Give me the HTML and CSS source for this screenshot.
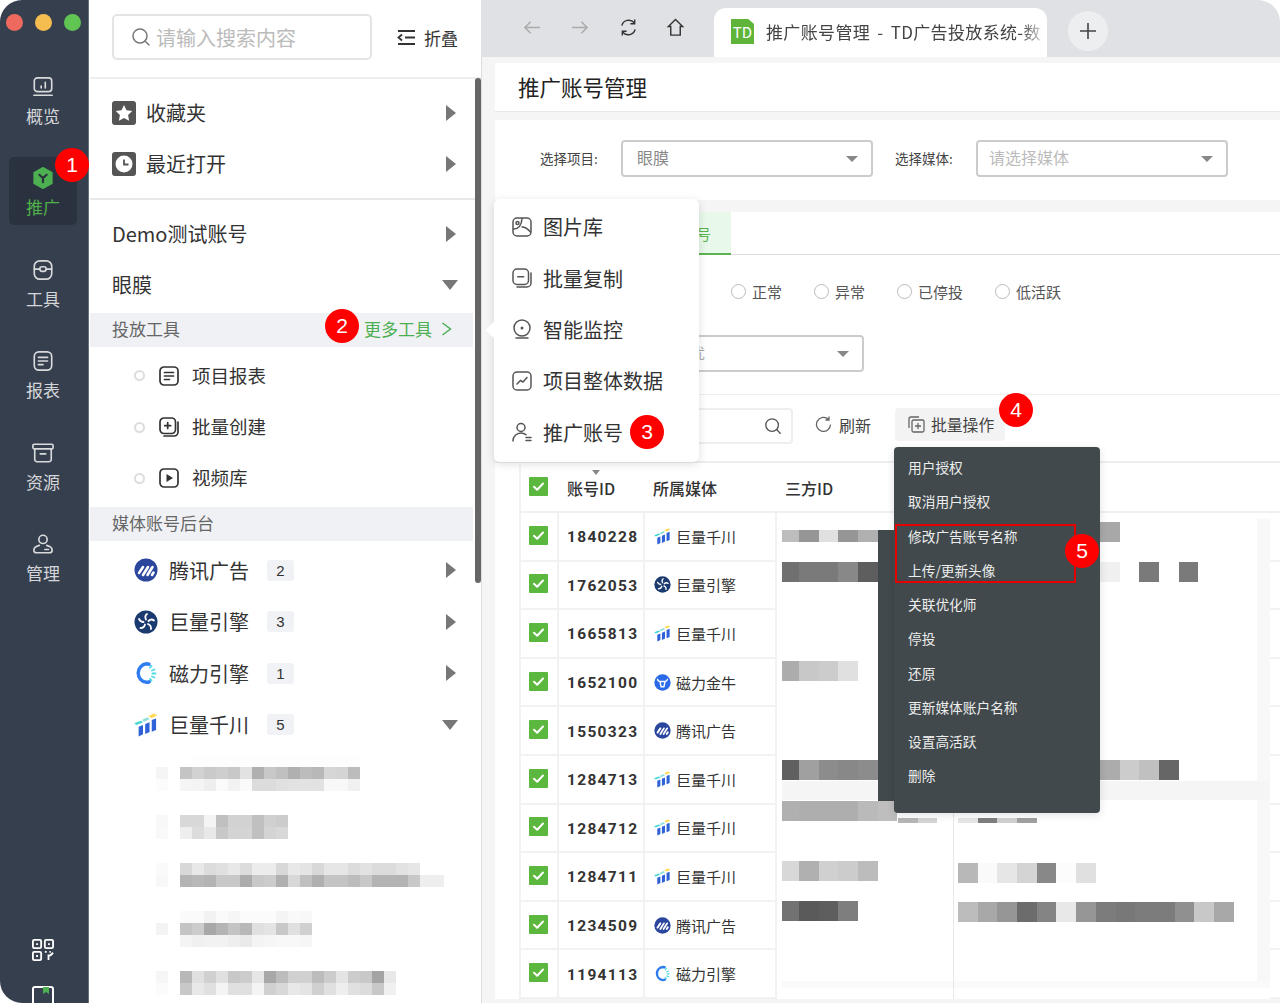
FILE: index.html
```html
<!DOCTYPE html>
<html lang="zh-CN">
<head>
    <meta charset="UTF-8">
    <title>推广账号管理</title>
    <link rel="stylesheet" href="styles.css">
</head>
<body>
<svg class="defs" xmlns="http://www.w3.org/2000/svg">
    <symbol id="i-qc" viewBox="0 1.500 21.500 22">
        <path fill="#3ed6d0" d="M0 11l6-2.500 2 1.500-6 2.500z"/>
        <path fill="#8fe0d8" d="M7 8l5-2.500 2 1.500-5 2.500z"/>
        <path fill="#ffd84d" d="M13 4.500l5-2.500 3 1.500-5 2.500z"/>
        <path fill="#2f62d8" d="M4 14l4-1.500v8.500l-4 2z"/>
        <path fill="#2f62d8" d="M10 11.500l4-1.500v9l-4 1.800z"/>
        <path fill="#2f62d8" d="M16 8l4-1.500v10.500l-4 1.800z"/>
    </symbol>
    <symbol id="i-tx" viewBox="0 0 24 24">
        <circle cx="12" cy="12" r="11.500" fill="#2b479d"/>
        <path fill="none" stroke="#fff" stroke-width="2.600" stroke-linecap="round" d="M5 15l4-6M9 17l5-8M13.500 17l5-8M18 17l1.500-2.500"/>
    </symbol>
    <symbol id="i-jl" viewBox="0 0 24 24">
        <circle cx="12" cy="12" r="11.500" fill="#1b3a70"/>
        <g fill="none" stroke="#fff" stroke-width="1.800" stroke-linecap="round">
            <path d="M12 9.500c-1-2-1-4 1-5.500M14.500 11c1.500-1.500 3.500-2 5.500-.5M14 14c2 .8 3.200 2.500 3 5M11 14.500c-.5 2-2 3.500-4.500 3.500M9.500 12c-2 0-3.500-1-4.500-3"/>
        </g>
    </symbol>
    <symbol id="i-cl" viewBox="0 0 24 24">
        <path fill="none" stroke="#2f7cf0" stroke-width="3.400" stroke-linecap="round" d="M15 3.200a9.500 9.500 0 0 0-2.500-.4 9.300 9.300 0 0 0 0 18.500c1 0 2-.2 2.800-.5"/>
        <g stroke="#4fd8e6" stroke-width="1.800" stroke-linecap="round">
            <path d="M16 6.500l1.500-1.500M18 9.500l2.500-1M18.500 12.500h3M18 15.500l2.500 1M16 18l1.500 1.500"/>
        </g>
    </symbol>
    <symbol id="i-cj" viewBox="0 0 24 24">
        <circle cx="12" cy="12" r="11.500" fill="#2a6ae8"/>
        <path fill="none" stroke="#fff" stroke-width="2" stroke-linecap="round" stroke-linejoin="round" d="M5 7.500c.5 2 2 3 4 3h6c2 0 3.500-1 4-3M8.500 11l1.500 7h4l1.500-7"/>
    </symbol>
    <symbol id="i-check" viewBox="0 0 19 19">
        <rect width="19" height="19" rx="1" fill="#5bb73e"/>
        <path fill="none" stroke="#fff" stroke-width="2" stroke-linecap="round" stroke-linejoin="round" d="M5 9.800l3.200 3L14 6.500"/>
    </symbol>
    <symbol id="i-search" viewBox="0 0 20 20">
        <circle cx="9" cy="9" r="7" fill="none" stroke="currentColor" stroke-width="1.500"/>
        <path stroke="currentColor" stroke-width="1.500" stroke-linecap="round" d="M14 14l4 4"/>
    </symbol>
</svg>

<div class="app">
    <nav class="rail">
        <div class="lights"><i class="red"></i><i class="amber"></i><i class="green"></i></div>
        <a class="rail-item">
            <svg viewBox="0 0 24 24"><rect x="2.500" y="2" width="19" height="15" rx="3.500"/><path d="M2 21h20M10 13v-2M14.500 13V7"/></svg>
            <span>概览</span>
        </a>
        <a class="rail-item active">
            <svg viewBox="0 0 24 24"><path class="hex" d="M12 0.800l9.600 5.500v11.400L12 23.200 2.400 17.700V6.300z"/><path class="hex-y" d="M8 8.500l4 3.500 4-3.500M12 12v4.500"/></svg>
            <span>推广</span>
        </a>
        <a class="rail-item">
            <svg viewBox="0 0 24 24"><rect x="2.500" y="2" width="19" height="20" rx="6"/><path d="M2.500 11h6M15.500 11h6"/><rect x="8.500" y="8.500" width="7" height="5" rx="2.500"/></svg>
            <span>工具</span>
        </a>
        <a class="rail-item">
            <svg viewBox="0 0 24 24"><rect x="2.500" y="2" width="19" height="20" rx="5"/><path d="M7 8h10M7 12h10M7 16h5"/></svg>
            <span>报表</span>
        </a>
        <a class="rail-item">
            <svg viewBox="0 0 24 24"><rect x="1" y="2.500" width="22" height="5" rx="1.500"/><path d="M3 7.500V19a2.500 2.500 0 0 0 2.500 2.500h13A2.500 2.500 0 0 0 21 19V7.500M9 13h6"/></svg>
            <span>资源</span>
        </a>
        <a class="rail-item">
            <svg viewBox="0 0 24 24"><circle cx="12" cy="7" r="4.500"/><path d="M8 13.500c-3.500.8-6 3.200-6 5.500 0 1.800 1 2.500 3 2.500h14c2 0 3-.7 3-2.500 0-2.300-2.500-4.700-6-5.500M14 18h4"/></svg>
            <span>管理</span>
        </a>
        <svg class="rail-qr" viewBox="0 0 24 24">
            <rect x="1" y="1" width="9" height="9" rx="1.500"/><rect x="14" y="1" width="9" height="9" rx="1.500"/><rect x="1" y="14" width="9" height="9" rx="1.500"/>
            <path d="M4.500 5.500h2M17.500 5.500h2M4.500 18.500h2M14 14h2M19 14l1.500 0M17 18h3M20 18l3-3M18 18v5"/>
        </svg>
        <svg class="rail-book" viewBox="0 0 22 24">
            <rect x="1" y="1" width="20" height="30" rx="2"/>
            <path class="flag" d="M11 1h6v7l-3-2-3 2z"/>
        </svg>
    </nav>

    <aside class="side">
        <div class="side-top">
            <div class="side-search">
                <svg class="search-ico" width="20" height="20"><use href="#i-search"/></svg>
                <span>请输入搜索内容</span>
            </div>
            <div class="collapse">
                <svg width="19" height="17" viewBox="0 0 19 17"><path d="M1 2h17M8 8.500h10M1 15h17M5 5.500L1.500 8.500 5 11.500"/></svg>
                <span>折叠</span>
            </div>
        </div>

        <div class="side-group fav">
            <div class="side-row">
                <svg class="row-ico" viewBox="0 0 24 24"><rect width="24" height="24" rx="3" fill="#555"/><path fill="#fff" d="M12 4l2.500 5.200 5.700.8-4.100 4 1 5.700L12 17l-5.100 2.700 1-5.700-4.100-4 5.700-.8z"/></svg>
                <span class="row-text">收藏夹</span><i class="caret-r"></i>
            </div>
            <div class="side-row">
                <svg class="row-ico" viewBox="0 0 24 24"><rect width="24" height="24" rx="3" fill="#555"/><circle cx="12" cy="12" r="8.500" fill="#fff"/><path fill="none" stroke="#555" stroke-width="1.800" d="M12 7.500V12.500H16.500"/></svg>
                <span class="row-text">最近打开</span><i class="caret-r"></i>
            </div>
        </div>

        <div class="side-group projects">
            <div class="side-row"><span>Demo测试账号</span><i class="caret-r"></i></div>
            <div class="side-row"><span>眼膜</span><i class="caret-d"></i></div>
        </div>

        <div class="band"><span>投放工具</span><span class="more">更多工具<svg width="11" height="14" viewBox="0 0 11 14"><path d="M1.500 1l8 6-8 6"/></svg></span></div>
        <div class="tool-list">
            <div class="tool-row"><i class="dot"></i>
                <svg viewBox="0 0 20 20"><rect x="1" y="1" width="18" height="18" rx="4"/><path d="M5.500 6.500h9M5.500 10h9M5.500 13.500h5"/></svg>
                <span>项目报表</span></div>
            <div class="tool-row"><i class="dot"></i>
                <svg viewBox="0 0 20 20"><rect x="1" y="1" width="15.500" height="15.500" rx="4"/><path d="M8.700 5.500v6M5.700 8.700h6M19 5v10a4 4 0 0 1-4 4H5"/></svg>
                <span>批量创建</span></div>
            <div class="tool-row"><i class="dot"></i>
                <svg viewBox="0 0 20 20"><rect x="1" y="1" width="18" height="18" rx="4"/><path class="solid" d="M7.500 6l6.500 4-6.500 4z"/></svg>
                <span>视频库</span></div>
        </div>

        <div class="band"><span>媒体账号后台</span></div>
        <div class="media-list">
            <div class="media-row"><svg><use href="#i-tx"/></svg><span class="row-text">腾讯广告</span><b>2</b><i class="caret-r"></i></div>
            <div class="media-row"><svg><use href="#i-jl"/></svg><span class="row-text">巨量引擎</span><b>3</b><i class="caret-r"></i></div>
            <div class="media-row"><svg><use href="#i-cl"/></svg><span class="row-text">磁力引擎</span><b>1</b><i class="caret-r"></i></div>
            <div class="media-row"><svg><use href="#i-qc"/></svg><span class="row-text">巨量千川</span><b>5</b><i class="caret-d"></i></div>
        </div>

        <div class="acct-list">
            <div class="mosaic c12" data-rows="00 00 00 fd fd fd fd fd fd fd fd fd fd fd fd fd fd|f5 00 c4 d2 ca ce c8 e2 b0 c8 c0 b0 bc b8 d6 d4 bc|fc 00 f5 f4 ee fa f2 fa dc dc e0 e2 e2 e2 f8 f8 f0"></div>
            <div class="mosaic c12" data-rows="f8 00 d8 d8 f4 c0 d2 d2 c0 d0 cc|f9 00 ee dc e8 c8 d4 d4 c0 d4 d8"></div>
            <div class="mosaic c12" data-rows="fa 00 d8 e8 dc e0 e8 dc ec ec d8 e8 e4 d8 e6 e6 dc e2 dc dc e2 e6|f8 00 b4 b8 b4 c8 c8 ac c8 cc b0 d8 c0 b0 c4 c4 bc c8 b4 b4 b4 c8 ee ee"></div>
            <div class="mosaic c12" data-rows="00 00 fa fa f2 fa f6 fb fb fb f4 f9 f8|f3 00 c4 cc a8 b4 c4 b8 e0 e4 c8 e0 d0|00 00 f4 f0 f2 f2 ee ea f4 f6 f8 f8 f6"></div>
            <div class="mosaic c12" data-rows="f6 00 b8 e0 d0 e0 c8 cc e6 a8 bc d0 d0 bc cc e4 cc c8 a4 e8|fb 00 c8 e8 e0 f4 e0 e0 f4 d0 d8 e8 e4 d0 e0 ee e0 dc c8 f0"></div>
        </div>
        <div class="side-scroll"></div>
    </aside>

    <main class="main">
        <header class="browser-bar">
            <div class="nav-btns">
                <svg class="off" viewBox="0 0 20 20"><path d="M18 10H2M8 4l-6 6 6 6"/></svg>
                <svg class="off" viewBox="0 0 20 20"><path d="M2 10h16M12 4l6 6-6 6"/></svg>
                <svg class="on reload" viewBox="0 0 20 20"><path d="M3 8a7.500 7.500 0 0 1 13-3M17 12a7.500 7.500 0 0 1-13 3M16.500 1.500V6H12M3.500 18.500V14H8"/></svg>
                <svg class="on" viewBox="0 0 20 20"><path d="M10 1.500L2.500 9h2.500v9h10V9h2.500z"/></svg>
            </div>
            <div class="tab">
                <span class="td">TD</span>
                <span class="tab-title">推广账号管理 - TD广告投放系统-数</span>
            </div>
            <div class="new-tab"><svg width="18" height="18" viewBox="0 0 18 18"><path d="M9 1v16M1 9h16"/></svg></div>
        </header>

        <div class="content">
            <div class="page-head">推广账号管理</div>
            <section class="filters">
                <label>选择项目:</label>
                <div class="select"><span>眼膜</span><i class="tri"></i></div>
                <label>选择媒体:</label>
                <div class="select empty"><span>请选择媒体</span><i class="tri"></i></div>
            </section>

            <section class="panel">
                <div class="tabs"><div class="tab-on">推广账号</div></div>
                <div class="radios">
                    <div class="radio"><i></i>正常</div>
                    <div class="radio"><i></i>异常</div>
                    <div class="radio"><i></i>已停投</div>
                    <div class="radio"><i></i>低活跃</div>
                </div>
                <div class="select-row">
                    <div class="select wide"><span>账号优</span><i class="tri"></i></div>
                </div>
                <div class="toolbar">
                    <div class="tb-search"><svg width="18" height="18"><use href="#i-search"/></svg></div>
                    <div class="refresh">
                        <svg width="17" height="17" viewBox="0 0 17 17"><path d="M15.500 8.500a7 7 0 1 1-2-5M14 0.500v3.500h-3.500"/></svg>
                        <span>刷新</span>
                    </div>
                    <div class="batch">
                        <svg width="17" height="17" viewBox="0 0 17 17"><path d="M1 12V3a2 2 0 0 1 2-2h8"/><rect x="4" y="4" width="12" height="12" rx="1.500"/><path d="M10 7v6M7 10h6"/></svg>
                        <span>批量操作</span>
                    </div>
                </div>

                <div class="table">
                    <div class="thead">
                        <div class="th"><svg class="cb"><use href="#i-check"/></svg></div>
                        <div class="th id"><i class="sort"></i>账号ID</div>
                        <div class="th">所属媒体</div>
                        <div class="th third">三方ID</div>
                    </div>
                    <div class="tr"><div class="td-c"><svg class="cb"><use href="#i-check"/></svg></div><div class="td-c num">1840228</div><div class="td-c mc"><svg><use href="#i-qc"/></svg>巨量千川</div><div class="rest"></div><div class="tick"></div></div>
                    <div class="tr"><div class="td-c"><svg class="cb"><use href="#i-check"/></svg></div><div class="td-c num">1762053</div><div class="td-c mc"><svg><use href="#i-jl"/></svg>巨量引擎</div><div class="rest"></div><div class="tick"></div></div>
                    <div class="tr"><div class="td-c"><svg class="cb"><use href="#i-check"/></svg></div><div class="td-c num">1665813</div><div class="td-c mc"><svg><use href="#i-qc"/></svg>巨量千川</div><div class="rest"></div><div class="tick"></div></div>
                    <div class="tr"><div class="td-c"><svg class="cb"><use href="#i-check"/></svg></div><div class="td-c num">1652100</div><div class="td-c mc"><svg><use href="#i-cj"/></svg>磁力金牛</div><div class="rest"></div><div class="tick"></div></div>
                    <div class="tr"><div class="td-c"><svg class="cb"><use href="#i-check"/></svg></div><div class="td-c num">1550323</div><div class="td-c mc"><svg><use href="#i-tx"/></svg>腾讯广告</div><div class="rest"></div><div class="tick"></div></div>
                    <div class="tr"><div class="td-c"><svg class="cb"><use href="#i-check"/></svg></div><div class="td-c num">1284713</div><div class="td-c mc"><svg><use href="#i-qc"/></svg>巨量千川</div><div class="rest"></div><div class="tick"></div></div>
                    <div class="tr"><div class="td-c"><svg class="cb"><use href="#i-check"/></svg></div><div class="td-c num">1284712</div><div class="td-c mc"><svg><use href="#i-qc"/></svg>巨量千川</div><div class="rest"></div><div class="tick"></div></div>
                    <div class="tr"><div class="td-c"><svg class="cb"><use href="#i-check"/></svg></div><div class="td-c num">1284711</div><div class="td-c mc"><svg><use href="#i-qc"/></svg>巨量千川</div><div class="rest"></div><div class="tick"></div></div>
                    <div class="tr"><div class="td-c"><svg class="cb"><use href="#i-check"/></svg></div><div class="td-c num">1234509</div><div class="td-c mc"><svg><use href="#i-tx"/></svg>腾讯广告</div><div class="rest"></div><div class="tick"></div></div>
                    <div class="tr"><div class="td-c"><svg class="cb"><use href="#i-check"/></svg></div><div class="td-c num">1194113</div><div class="td-c mc"><svg><use href="#i-cl"/></svg>磁力引擎</div><div class="rest"></div><div class="tick"></div></div>
                </div>
            </section>
        </div>
    </main>

    <!-- things that lie over the table, placed in page coordinates -->
    <div class="gutter"></div>
    <div class="pale-strip"></div>
    <div class="foot-strip"></div>
    <div class="col-line"></div>
    <div class="mosaic over cut c20 h12" data-x="782" data-y="530" data-rows="bd 96 e0 96 b0"></div>
    <div class="mosaic over c20" data-x="1100" data-y="522" data-rows="a8"></div>
    <div class="mosaic over cut c20" data-x="782" data-y="562" data-rows="70 7a 7a 88 5e"></div>
    <div class="mosaic over c20" data-x="1100" data-y="562" data-rows="f0 00 7a 00 7a"></div>
    <div class="mosaic over cut c20" data-x="782" data-y="661" data-rows="ac c8 cc e0"></div>
    <div class="mosaic over cut c20" data-x="782" data-y="760" data-rows="60 a0 8c 88 8c"></div>
    <div class="mosaic over c20" data-x="1100" data-y="760" data-rows="ac cc c0 66"></div>
    <div class="mosaic over cut c20" data-x="782" data-y="801" data-rows="b0 ae ae ae ba be"></div>
    <div class="mosaic over c20 h5" data-x="898" data-y="818" data-rows="b6 d4"></div>
    <div class="mosaic over c20 h5" data-x="958" data-y="818" data-rows="e6 7e d0 a0"></div>
    <div class="mosaic over cut c20" data-x="782" data-y="861" data-rows="d8 b0 d0 cc bc"></div>
    <div class="mosaic over c20" data-x="958" data-y="863" data-rows="b8 fa e6 d4 88 fc e0"></div>
    <div class="mosaic over cut c20" data-x="782" data-y="901" data-rows="72 5a 5e 7e"></div>
    <div class="mosaic over c20" data-x="958" data-y="902" data-rows="bc a8 96 6c 84 e8 96 7c 78 7c 7c 90 c8 a8"></div>
    <div class="fixed-col"></div>

    <div class="tools-pop">
        <div class="pop-row"><svg viewBox="0 0 20 20"><rect x="1" y="1" width="18" height="18" rx="4"/><path d="M1.500 12c5 0 8-3 8.500-10.500M10 10c3 0 6 2 8.500 5"/><circle cx="5.500" cy="6" r="1.500"/></svg>图片库</div>
        <div class="pop-row"><svg viewBox="0 0 20 20"><rect x="1" y="1" width="15.500" height="15.500" rx="4"/><path d="M5.700 8.700h6M19 5v10a4 4 0 0 1-4 4H5"/></svg>批量复制</div>
        <div class="pop-row"><svg viewBox="0 0 20 20"><circle cx="10" cy="9" r="8"/><circle class="solid" cx="10" cy="9" r="1.500"/><path d="M4 19h12"/></svg>智能监控</div>
        <div class="pop-row"><svg viewBox="0 0 20 20"><rect x="1" y="1" width="18" height="18" rx="4"/><path d="M5 13l3.500-3.500 2.500 1.500 4-4.500"/></svg>项目整体数据</div>
        <div class="pop-row"><svg viewBox="0 0 20 20"><circle cx="9" cy="5.500" r="4"/><path d="M1 19c0-4.500 3.500-8 8-8 2 0 3.500.6 5 1.700M14 15.500h5M14 18.500h5"/></svg>推广账号</div>
    </div>

    <div class="batch-menu">
        <div>用户授权</div>
        <div>取消用户授权</div>
        <div>修改广告账号名称</div>
        <div>上传/更新头像</div>
        <div>关联优化师</div>
        <div>停投</div>
        <div>还原</div>
        <div>更新媒体账户名称</div>
        <div>设置高活跃</div>
        <div>删除</div>
    </div>
    <div class="red-box"></div>

    <div class="badge b1">1</div>
    <div class="badge b2">2</div>
    <div class="badge b3">3</div>
    <div class="badge b4">4</div>
    <div class="badge b5">5</div>
</div>

<script src="mosaic.js"></script>
</body>
</html>
```

FILE: styles.css
```css
* {
    box-sizing: border-box;
}
html, body {
    margin: 0;
    height: 100%;
    overflow: hidden;
    background: #fff;
}
body {
    font-family: "Noto Sans CJK SC", "Noto Sans", sans-serif;
    color: #333;
}
.defs {
    position: absolute;
    width: 0;
    height: 0;
}
.app {
    position: relative;
    display: flex;
    width: 1280px;
    height: 1003px;
    overflow: hidden;
}

/* left rail */
.rail {
    position: relative;
    flex: 0 0 89px;
    display: flex;
    flex-direction: column;
    align-items: center;
    height: 1003px;
    padding: 65px 2px 0 0;
    overflow: hidden;
    background: #363f4e;
    border-right: 1px solid #66707c;
    border-radius: 22px 0 0 22px;
}
.lights {
    position: absolute;
    top: 14px;
    left: 6px;
    display: flex;
    gap: 12px;
}
.lights i {
    width: 17px;
    height: 17px;
    border-radius: 50%;
}
.lights .red { background: #ee6a5f; }
.lights .amber { background: #f5bd4f; }
.lights .green { background: #61c554; }
.rail-item {
    display: flex;
    flex-direction: column;
    align-items: center;
    flex: 0 0 68px;
    width: 68px;
    margin-bottom: 23.500px;
    padding-top: 10.500px;
    border-radius: 5px;
    color: #d4d6d9;
    font-size: 17px;
    line-height: 24px;
}
.rail-item svg {
    width: 22px;
    height: 22px;
    margin-bottom: 6px;
    fill: none;
    stroke: #d8dadc;
    stroke-width: 1.800;
    stroke-linecap: round;
}
.rail-item.active {
    background: #2b323f;
    color: #4fb04a;
}
.rail-item .hex {
    fill: #4caf50;
    stroke: #4caf50;
}
.rail-item .hex-y {
    stroke: #2b323f;
    stroke-width: 2.400;
}
.rail-qr {
    width: 22px;
    height: 22px;
    margin-top: auto;
    fill: none;
    stroke: #fff;
    stroke-width: 2;
}
.rail-book {
    flex: 0 0 24px;
    width: 22px;
    height: 24px;
    margin: 25px 0 -7px;
    fill: none;
    stroke: #fff;
    stroke-width: 2;
}
.rail-book .flag {
    fill: #4caf50;
    stroke: none;
}

/* tree sidebar */
.side {
    position: relative;
    flex: 0 0 392px;
    padding-left: 1px;
    background: #fff;
    font-size: 20px;
}
.side-top {
    display: flex;
    align-items: flex-start;
    height: 79px;
    padding: 14px 0 0 22px;
    border-bottom: 2px solid #eee;
}
.side-search {
    display: flex;
    align-items: center;
    width: 260px;
    height: 46px;
    padding-left: 17px;
    border: 2px solid #e4e4e4;
    border-radius: 5px;
    color: #bbb;
}
.search-ico {
    margin-right: 5px;
    color: #777;
}
.collapse {
    display: flex;
    align-items: center;
    height: 46px;
    margin-left: 25px;
    font-size: 17px;
    gap: 8px;
}
.collapse svg {
    fill: none;
    stroke: #333;
    stroke-width: 1.800;
}
.side-group {
    padding-top: 8px;
}
.side-group.fav {
    height: 121px;
    border-bottom: 2px solid #e8e8e8;
}
.side-row {
    display: flex;
    align-items: center;
    justify-content: space-between;
    height: 51px;
    padding: 0 25px 0 22px;
}
.row-ico {
    flex: 0 0 24px;
    width: 24px;
    height: 24px;
    margin-right: 10px;
}
.row-text {
    flex: 0 0 auto;
}
.fav .row-text {
    margin-right: auto;
}
.caret-r {
    width: 0;
    height: 0;
    border-left: 10px solid #777;
    border-top: 8px solid transparent;
    border-bottom: 8px solid transparent;
}
.caret-d {
    width: 0;
    height: 0;
    margin-right: -2px;
    border-top: 10px solid #777;
    border-left: 8px solid transparent;
    border-right: 8px solid transparent;
}
.projects {
    height: 113px;
    padding-top: 8px;
}
.band {
    display: flex;
    align-items: center;
    justify-content: space-between;
    width: 383px;
    height: 34px;
    padding: 0 21px 3px 22px;
    background: #f0f1f5;
    color: #666;
    font-size: 17px;
}
.more {
    display: flex;
    align-items: center;
    gap: 9px;
    color: #4caf50;
}
.more svg {
    fill: none;
    stroke: #4caf50;
    stroke-width: 1.500;
}
.tool-list {
    padding: 3px 0;
}
.tool-row {
    display: flex;
    align-items: center;
    height: 51.400px;
    padding-left: 44px;
    font-size: 18.500px;
}
.tool-row span {
    padding-bottom: 2px;
}
.tool-row .dot {
    width: 11px;
    height: 11px;
    margin-right: 14px;
    border: 2px solid #ddd;
    border-radius: 50%;
}
.tool-row svg {
    width: 20px;
    height: 20px;
    margin-right: 13px;
    fill: none;
    stroke: #333;
    stroke-width: 1.700;
    stroke-linecap: round;
}
.tool-row svg .solid {
    fill: #333;
    stroke: none;
}
.media-list {
    padding-top: 3.500px;
}
.media-row {
    display: flex;
    align-items: center;
    width: 367px;
    height: 51.400px;
    padding-left: 44px;
}
.media-row svg {
    flex: 0 0 24px;
    width: 24px;
    height: 24px;
    margin-right: 11px;
}
.media-row b {
    width: 27px;
    height: 21px;
    margin-left: 18px;
    background: #f1f2f6;
    border-radius: 3px;
    font-weight: normal;
    font-size: 15px;
    line-height: 22px;
    text-align: center;
    font-family: "Liberation Sans", sans-serif;
}
.media-row i {
    margin-left: auto;
}
.media-row .caret-r {
    margin-right: 1px;
}
.media-row .caret-d {
    margin-right: -1px;
}
.acct-list {
    display: flex;
    flex-direction: column;
    gap: 24px;
    padding: 4.500px 0 0 66px;
}
.side-scroll {
    position: absolute;
    top: 78px;
    right: 0;
    width: 6px;
    height: 505px;
    background: #666;
    border-radius: 3px;
}

/* pixelated blocks */
.mrow {
    display: flex;
}
.mrow span {
    flex: 0 0 auto;
}
.c12 .mrow span {
    width: 12px;
    height: 12px;
}
.c20 .mrow span {
    width: 19.700px;
    height: 20px;
}
.h12 .mrow span {
    height: 12px;
}
.h5 .mrow span {
    height: 5px;
}
.cut .mrow span:first-child {
    width: 17px;
}
.mosaic.over {
    position: absolute;
}

/* browser chrome */
.main {
    flex: 1;
    min-width: 0;
    display: flex;
    flex-direction: column;
}
.browser-bar {
    display: flex;
    align-items: flex-end;
    flex: 0 0 57px;
    padding-left: 29px;
    background: #dfe1e5;
    border-radius: 0 22px 0 0;
}
.nav-btns {
    display: flex;
    align-self: center;
    gap: 28px;
    width: 204px;
    margin-top: -3px;
    padding-left: 13px;
}
.nav-btns svg {
    width: 19px;
    height: 19px;
    fill: none;
    stroke-width: 1.500;
}
.nav-btns .off {
    stroke: #aaa;
}
.nav-btns .on {
    stroke: #333;
}
.nav-btns .reload {
    margin-left: 2px;
}
.tab {
    display: flex;
    align-items: center;
    width: 333px;
    height: 49px;
    padding: 0 0 2px 17px;
    background: #fff;
    border-radius: 12px 12px 0 0;
}
.td {
    flex: 0 0 23px;
    height: 25px;
    margin-right: 12px;
    background: #5eb53a;
    color: #fff;
    font-size: 15px;
    line-height: 25px;
    text-align: center;
    clip-path: polygon(0 0, 75% 0, 100% 20%, 100% 100%, 0 100%);
}
.tab-title {
    white-space: nowrap;
    font-size: 17px;
    letter-spacing: 0.350px;
    word-spacing: 3px;
    color: #444;
    -webkit-mask-image: linear-gradient(to right, #000 93%, rgba(0, 0, 0, 0.25));
    mask-image: linear-gradient(to right, #000 93%, rgba(0, 0, 0, 0.25));
}
.new-tab {
    display: flex;
    align-items: center;
    justify-content: center;
    align-self: center;
    width: 40px;
    height: 40px;
    margin: 5px 0 0 21px;
    background: #eceef0;
    border-radius: 50%;
}
.new-tab svg {
    fill: none;
    stroke: #444;
    stroke-width: 1.600;
}

/* page */
.content {
    flex: 1;
    padding: 6px 0 0 13px;
    background: #f5f5f5;
    border-left: 1px solid #ddd;
    overflow: hidden;
}
.page-head {
    height: 49px;
    padding-left: 23px;
    background: #fff;
    border-bottom: 1px solid #e8e8e8;
    font-size: 21.500px;
    line-height: 48px;
    color: #222;
}
.filters {
    display: flex;
    align-items: center;
    height: 80px;
    margin-top: 8px;
    padding: 0 0 4px 45px;
    background: #fff;
}
.filters label {
    width: 81px;
    font-size: 13.500px;
    color: #444;
}
.select {
    position: relative;
    display: flex;
    align-items: center;
    width: 252px;
    height: 37px;
    margin-right: 22px;
    padding: 0 0 2px 14px;
    border: 2px solid #ccc;
    border-radius: 4px;
    color: #888;
    font-size: 16px;
}
.select.empty {
    padding-left: 11px;
    color: #bbb;
}
.tri {
    position: absolute;
    right: 13px;
    top: 14px;
    width: 0;
    height: 0;
    border-top: 6px solid #888;
    border-left: 6px solid transparent;
    border-right: 6px solid transparent;
}
.panel {
    margin-top: 12px;
    background: #fff;
}
.tabs {
    height: 43px;
    border-bottom: 1px solid #ddd;
}
.tab-on {
    width: 236px;
    height: 43px;
    padding-right: 20px;
    background: #e8f8ea;
    border-bottom: 2px solid #5bb450;
    color: #5bb450;
    font-size: 14.500px;
    line-height: 44px;
    text-align: right;
}
.radios {
    display: flex;
    align-items: center;
    height: 72px;
    padding-left: 236px;
    font-size: 15px;
    color: #555;
}
.radio {
    display: flex;
    align-items: center;
    gap: 6px;
    margin-right: 32px;
}
.radio i {
    width: 15px;
    height: 15px;
    border: 1.500px solid #bbb;
    border-radius: 50%;
}
.select-row {
    height: 68px;
    padding: 8px 0 0 65px;
    border-bottom: 1px solid #eee;
}
.select.wide {
    justify-content: flex-end;
    width: 304px;
    margin-right: 0;
    padding-right: 157px;
    color: #aaa;
    font-size: 14.500px;
}
.toolbar {
    display: flex;
    align-items: flex-start;
    height: 68px;
    padding: 13px 0 0 65px;
    border-bottom: 2px solid #eee;
}
.tb-search {
    display: flex;
    align-items: center;
    justify-content: flex-end;
    width: 233px;
    height: 36px;
    padding-right: 9px;
    border: 2px solid #eee;
    border-radius: 4px;
    color: #555;
}
.refresh {
    display: flex;
    align-items: center;
    gap: 7px;
    height: 33px;
    margin-left: 22px;
    font-size: 16px;
    color: #444;
}
.refresh svg, .batch svg {
    fill: none;
    stroke: #666;
    stroke-width: 1.300;
}
.batch {
    display: flex;
    align-items: center;
    gap: 6px;
    width: 110px;
    height: 33px;
    margin-left: 24px;
    padding-left: 13px;
    background: #f3f3f3;
    border-radius: 4px;
    font-size: 15.800px;
    color: #444;
}

/* table */
.table {
    margin: 2px 0 0 24px;
    border-left: 2px solid #f2f2f2;
}
.thead, .tr {
    display: grid;
    grid-template-columns: 38px 86px 132px 1fr 10px;
}
.thead {
    height: 48px;
    border-bottom: 2px solid #f0f0f0;
}
.th {
    position: relative;
    display: flex;
    align-items: center;
    padding-left: 8px;
    padding-bottom: 1px;
    font-size: 16px;
    font-weight: 500;
    color: #333;
}
.sort {
    position: absolute;
    left: 33px;
    top: 5px;
    width: 0;
    height: 0;
    border-top: 5px solid #888;
    border-left: 4px solid transparent;
    border-right: 4px solid transparent;
}
.tr {
    height: 48.600px;
}
.td-c {
    display: flex;
    align-items: center;
    padding-left: 8px;
    padding-bottom: 2px;
    border-right: 2px solid #f2f2f2;
    border-bottom: 2px solid #f2f2f2;
}
.th:first-child {
    padding-bottom: 4px;
}
.cb {
    flex: 0 0 19px;
    width: 19px;
    height: 19px;
}
.num {
    padding-top: 2px;
    padding-bottom: 0;
    font-family: Roboto, sans-serif;
    font-weight: 700;
    font-size: 15.500px;
    letter-spacing: 1.300px;
    color: #333;
}
.mc {
    padding-left: 9px;
    padding-bottom: 0;
    font-size: 15px;
    color: #333;
}
.mc svg {
    flex: 0 0 17px;
    width: 17px;
    height: 17px;
    margin-right: 5px;
}
.tick {
    border-bottom: 2px solid #f2f2f2;
}

/* overlays in page coordinates */
.gutter {
    position: absolute;
    left: 1257px;
    top: 519px;
    width: 13px;
    height: 466px;
    background: #f8f8f8;
}
.pale-strip {
    position: absolute;
    left: 782px;
    top: 781px;
    width: 488px;
    height: 19px;
    background: #f5f5f5;
}
.foot-strip {
    position: absolute;
    left: 782px;
    top: 981px;
    width: 488px;
    height: 7px;
    background: #fafafa;
}
.col-line {
    position: absolute;
    left: 953px;
    top: 813px;
    width: 1px;
    height: 186px;
    background: #e8e8e8;
}
.fixed-col {
    position: absolute;
    left: 878px;
    top: 530px;
    width: 16px;
    height: 271px;
    background: #41494c;
}
.tools-pop {
    position: absolute;
    left: 494px;
    top: 199px;
    width: 205px;
    height: 263px;
    padding-top: 2px;
    background: #fff;
    border-radius: 6px;
    box-shadow: 0 2px 10px rgba(0, 0, 0, 0.13);
    font-size: 20px;
}
.tools-pop::before {
    content: "";
    position: absolute;
    left: -6px;
    top: 125px;
    width: 12px;
    height: 12px;
    background: #fff;
    transform: rotate(45deg);
}
.pop-row {
    position: relative;
    display: flex;
    align-items: center;
    gap: 11px;
    height: 51.400px;
    padding-left: 18px;
}
.pop-row svg {
    flex: 0 0 20px;
    width: 20px;
    height: 20px;
    fill: none;
    stroke: #555;
    stroke-width: 1.500;
    stroke-linecap: round;
}
.pop-row svg .solid {
    fill: #555;
    stroke: none;
}
.batch-menu {
    position: absolute;
    left: 894px;
    top: 447px;
    width: 206px;
    height: 366px;
    padding-top: 4px;
    background: #41494c;
    border-radius: 4px;
    box-shadow: 0 2px 8px rgba(0, 0, 0, 0.12);
    color: #eee;
    font-size: 13.700px;
}
.batch-menu div {
    height: 34.250px;
    padding-left: 14px;
    line-height: 33px;
}
.red-box {
    position: absolute;
    left: 895px;
    top: 524px;
    width: 181px;
    height: 59px;
    border: 2.500px solid #e60000;
}
.badge {
    position: absolute;
    width: 34px;
    height: 34px;
    background: #ff0000;
    border-radius: 50%;
    color: #fff;
    font-family: "Liberation Sans", sans-serif;
    font-size: 21px;
    line-height: 33px;
    text-align: center;
}
.b1 { left: 55px; top: 148px; }
.b2 { left: 325px; top: 309px; }
.b3 { left: 630px; top: 415px; }
.b4 { left: 999px; top: 393px; }
.b5 { left: 1065px; top: 534px; }
```

FILE: mosaic.js
```js
// turns data-rows into little grey cells, "00" leaves a cell empty
document.querySelectorAll('.mosaic').forEach(el => {
    el.dataset.rows.split('|').forEach(row => {
        const line = document.createElement('div');
        line.className = 'mrow';
        row.trim().split(' ').forEach(v => {
            const cell = document.createElement('span');
            if (v !== '00') cell.style.background = `#${v}${v}${v}`;
            line.appendChild(cell);
        });
        el.appendChild(line);
    });
    if (el.dataset.x) {
        el.style.left = el.dataset.x + 'px';
        el.style.top = el.dataset.y + 'px';
    }
});
```
